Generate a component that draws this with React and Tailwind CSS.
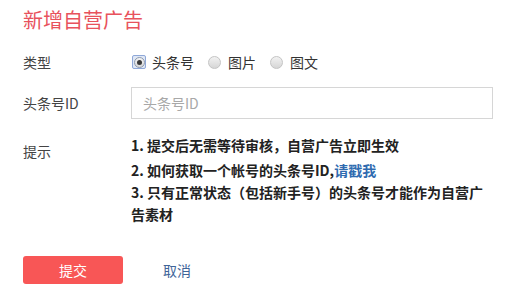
import React from "react";

function Radio({ checked }) {
  if (checked) {
    return (
      <span className="flex h-[14px] w-[14px] items-center justify-center rounded-[2px] border border-[#8fa8d8] bg-[#dfe7f5]">
        <span className="flex h-[11px] w-[11px] items-center justify-center rounded-full border border-[#8e9aae] bg-gradient-to-b from-[#f4f4f4] to-[#d8d8d8]">
          <span className="h-[5px] w-[5px] rounded-full bg-[#3a3a3a]" />
        </span>
      </span>
    );
  }
  return (
    <span className="h-[13px] w-[13px] rounded-full border border-[#c4c4c4] bg-gradient-to-b from-[#f2f2f2] to-[#d6d6d6]" />
  );
}

export default function App() {
  const font = { fontFamily: '"Noto Sans CJK SC", "Noto Sans", sans-serif' };
  return (
    <div className="h-[291px] w-[531px] bg-white px-[23px] text-[14px] text-[#444]" style={font}>
      <h1 className="pt-[6px] text-[20px] leading-[28px] text-[#e8525c]">新增自营广告</h1>

      <div className="mt-[17px] flex h-[22px] items-center">
        <div className="w-[108px] leading-[22px]">类型</div>
        <div className="flex items-center">
          <span className="ml-[1px]"><Radio checked /></span>
          <span className="ml-[6px] mr-[14px] leading-[22px] text-[#333]">头条号</span>
          <Radio />
          <span className="ml-[7px] mr-[14px] leading-[22px] text-[#333]">图片</span>
          <Radio />
          <span className="ml-[7px] leading-[22px] text-[#333]">图文</span>
        </div>
      </div>

      <div className="mt-[14px] flex items-center">
        <div className="w-[108px] leading-[22px]">头条号ID</div>
        <input
          className="h-[32px] w-[362px] border border-[#d6d6d6] px-[11px] text-[14px] text-[#333] outline-none placeholder:text-[#a8a8a8]"
          placeholder="头条号ID"
          style={font}
        />
      </div>

      <div className="mt-[15px] flex">
        <div className="w-[108px] pt-[6px] leading-[22px]">提示</div>
        <div className="w-[362px] font-bold leading-[22px] text-[#222]">
          <p className="mb-[3px]">1. 提交后无需等待审核，自营广告立即生效</p>
          <p>
            2. 如何获取一个帐号的头条号ID,<span className="text-[#2f6bb0]">请戳我</span>
          </p>
          <p>3. 只有正常状态（包括新手号）的头条号才能作为自营广告素材</p>
        </div>
      </div>

      <div className="mt-[31px] flex items-center">
        <button className="h-[28px] w-[100px] rounded-[3px] bg-[#f85656] text-[14px] text-white" style={font}>
          提交
        </button>
        <span className="ml-[40px] text-[#406599]">取消</span>
      </div>
    </div>
  );
}
